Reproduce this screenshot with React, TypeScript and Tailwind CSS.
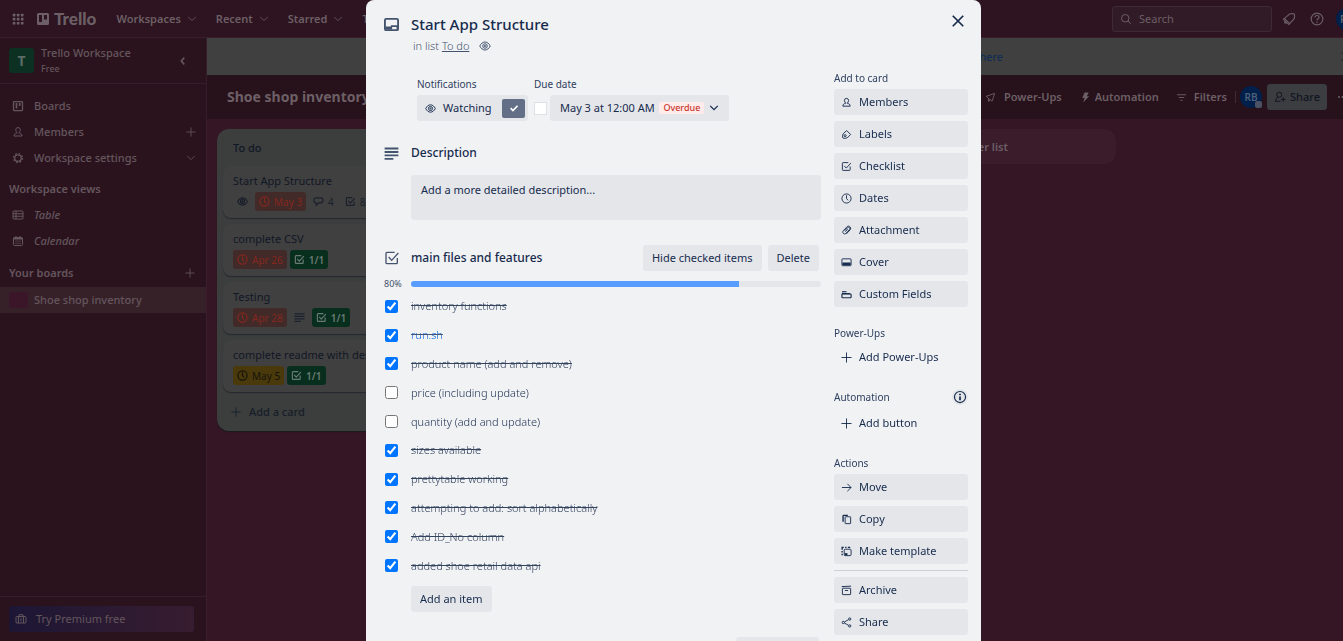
import React from "react";
import type { ReactNode } from "react";

type IconName =
  | "apps" | "board" | "person" | "gear" | "table" | "calendar" | "plus" | "down" | "left"
  | "eye" | "clock" | "comment" | "check" | "lines" | "case" | "search" | "bell" | "help"
  | "rocket" | "bolt" | "filter" | "addPerson" | "close" | "card" | "tick" | "label"
  | "clip" | "cover" | "fields" | "info" | "arrow" | "copy" | "template" | "archive" | "share" | "more";

const solid = { fill: "currentColor", stroke: "none" };

const drawings: Record<IconName, ReactNode> = {
  apps: (
    <g {...solid}>
      {[3, 10, 17].map((y) => [3, 10, 17].map((x) => <rect key={`${x}-${y}`} x={x} y={y} width="4.500" height="4.500" rx="1" />))}
    </g>
  ),
  board: <><rect x="3" y="3" width="18" height="18" rx="1" strokeWidth="2.500" /><path d="M9 6v11M15.500 6v6" strokeWidth="3.500" /></>,
  person: <path d="M12 3a4.5 4.5 0 0 0-4.500 4.500c0 2.500 1.500 5 3 6-4 .7-6.500 3-6.500 6.500h16c0-3.500-2.500-5.800-6.500-6.500 1.500-1 3-3.500 3-6A4.500 4.500 0 0 0 12 3z" />,
  gear: <><circle cx="12" cy="12" r="6.500" strokeWidth="2.500" /><circle cx="12" cy="12" r="9" strokeWidth="2.500" strokeDasharray="3.534 3.534" /></>,
  table: <><rect x="2" y="4" width="20" height="16" rx="2" /><path d="M2 9.500h20M2 14.500h20M8 4v16" /></>,
  calendar: (
    <>
      <rect x="3" y="5" width="18" height="16" rx="2" /><path d="M3 7h18" strokeWidth="4" /><path d="M8 2v3M16 2v3" />
      <path d="M7 12h2m2 0h2m2 0h2M7 16.500h2m2 0h2m2 0h2" strokeWidth="2.500" />
    </>
  ),
  plus: <path d="M12 1v22M1 12h22" />,
  down: <path d="M3 7l9 9 9-9" />,
  left: <path d="M15 4l-7 8 7 8" />,
  eye: <><path d="M1.500 12C4 7 7.700 4 12 4S20 7 22.500 12C20 17 16.300 20 12 20S4 17 1.500 12z" /><circle cx="12" cy="12" r="4.500" /><circle cx="12" cy="12" r="1.300" /></>,
  clock: <><circle cx="12" cy="12" r="10" /><path d="M12 5v7l3.500 4" /></>,
  comment: <path d="M7.500 4h9a5.500 5.500 0 0 1 0 11H13l-6 5v-5a5.500 5.500 0 0 1 .500-11z" />,
  check: <><path d="M20 12v7a1.500 1.500 0 0 1-1.500 1.500h-14A1.500 1.500 0 0 1 3 19V5a1.500 1.500 0 0 1 1.500-1.500H16" /><path d="M7 10.500l4.500 5L21.500 4.500" /></>,
  lines: <path d="M1 4h22M1 9.500h22M1 15h22M1 20.500h14" />,
  case: <><rect x="2" y="7" width="20" height="13" rx="2" /><path d="M8 7V3.500h8V7M7 7v13M17 7v13M12 10v7" /></>,
  search: <><circle cx="10.500" cy="10.500" r="7.500" /><path d="M16 16l5.500 5.500" /></>,
  bell: <><path d="M13 3.500c3.500-1 6.500-.500 8 0 .5 1.500 1 4.500 0 8L13 20 4 11z" /><path d="M4 11l-1.500 1.500 9 9L13 20M5.500 16c-2 1.500-1 4 2.500 2.500" /></>,
  help: <><circle cx="12" cy="12" r="10" /><path d="M8.500 9.500c0-2 1.500-3.500 3.500-3.500s3.500 1.300 3.500 3.200c0 2.300-3.500 2.500-3.500 5.300M12 16.500v2.500" /></>,
  rocket: <path d="M21 3L2.500 9.500l5 4.500v6.500l4-3.500 4 3L21 3zM7.500 14l4 3" />,
  bolt: <path {...solid} d="M10 1h9l-4 8h5L7 23l3-10H5z" />,
  filter: <path d="M2 6h20M6 12h12M9.500 18h5" />,
  addPerson: <><circle cx="10.500" cy="7.500" r="5" /><path d="M8 12l-4 3.500-1.500 5H13M18.500 12.500v9M14 17h9" /></>,
  close: <path d="M3 3l18 18M21 3L3 21" />,
  card: <><rect x="1.500" y="3" width="21" height="18" rx="2" /><path d="M2 17.500h11M20 17.500h2" strokeWidth="5" /><path d="M11 14.500h11" /></>,
  tick: <path d="M4 12.500l5.500 5.500L20.500 6.500" />,
  label: <><path d="M12.500 3.500L21 12l-5.500 5.500c-2.500 2.500-5.500 2.800-9.500 2.800-1.500 0-2.500-1-2.500-2.500C3.500 14 3.800 11 6 9z" /><circle cx="9" cy="14.500" r="2.200" /></>,
  clip: <path d="M8 12.500l6-6.500c3-3 7 1 4.500 4L11 18c-4 4-9.500-1-6-5.500L13 4c4-4.500 11 2 7 6.500l-8.500 9M9.500 14.500l5-5.500" />,
  cover: <><rect x="2" y="4" width="20" height="15" rx="1.500" /><path d="M3 15h18" strokeWidth="6" /></>,
  fields: <><path d="M2 6h10" strokeWidth="2.500" /><rect x="2" y="11" width="20" height="8" rx="1.500" strokeWidth="2.500" /><path d="M2 10h18" strokeWidth="2.500" /></>,
  info: <><circle cx="12" cy="12" r="9.500" /><path d="M12 6.500v2.500M12 11v6.500" strokeWidth="3" /></>,
  arrow: <path d="M2 12h20M14 4l8 8-8 8" />,
  copy: <><rect x="9" y="6" width="12" height="15" rx="1" /><path d="M15 3H6a1.500 1.500 0 0 0-1.500 1.500V17" strokeWidth="3" /></>,
  template: <><rect x="7" y="7" width="15" height="14" rx="2" /><path d="M8 18h6" strokeWidth="5" /><path d="M2.500 20v-3m0-3v-3m0-3V3H6m3 0h3m3 0h5" strokeWidth="3" /></>,
  archive: <><path d="M1.500 3.500L22 2.500" /><rect x="3" y="7" width="18" height="14" rx="1" /><path d="M8.500 12h7" /></>,
  share: <><circle cx="5" cy="12" r="2.500" /><circle cx="19" cy="4.500" r="2.500" /><circle cx="19" cy="19.500" r="2.500" /><path d="M7.500 10.800l9-5M7.500 13.200l9 5" /></>,
  more: <g {...solid}><circle cx="4" cy="12" r="2" /><circle cx="11" cy="12" r="2" /><circle cx="18" cy="12" r="2" /></g>,
};

function Icon({ name, className = "size-3", weight = 2 }: { name: IconName; className?: string; weight?: number }) {
  return (
    <svg viewBox="0 0 24 24" className={`shrink-0 ${className}`} fill="none" stroke="currentColor" strokeWidth={weight} aria-hidden="true">
      {drawings[name]}
    </svg>
  );
}

function TrelloMark() {
  return (
    <svg viewBox="0 0 24 24" className="size-3 shrink-0" aria-hidden="true">
      <path fill="currentColor" fillRule="evenodd" d="M3 0h18a3 3 0 0 1 3 3v18a3 3 0 0 1-3 3H3a3 3 0 0 1-3-3V3a3 3 0 0 1 3-3zm1 4v14h6V4zm10 0v9h6V4z" />
    </svg>
  );
}

function TopBar() {
  return (
    <header className="flex h-[38px] shrink-0 items-center border-b border-[#391d2b] bg-[#2d1420] pl-[11px] font-semibold text-[#6c5f65]">
      <button aria-label="More from Atlassian"><Icon name="apps" className="size-[14px]" /></button>
      <a href="#home" className="ml-3 flex items-center gap-[5px] font-['Lato'] text-[17px] font-black">
        <TrelloMark />
        Trello
      </a>
      <nav className="ml-5 flex items-center gap-[19px]">
        {["Workspaces", "Recent", "Starred", "Templates"].map((item) => (
          <button key={item} className="flex items-center gap-1.5">
            {item}
            <Icon name="down" className="size-2.5" />
          </button>
        ))}
      </nav>
      <div className="ml-auto flex items-center">
        <label className="flex h-[26px] w-40 items-center gap-[7px] rounded-[3px] border border-[#3f2a34] bg-[#311b26] pl-[7px] font-normal">
          <Icon name="search" />
          <input type="search" aria-label="Search" placeholder="Search" className="w-24 bg-transparent outline-none placeholder:text-[#6c5f65]" />
        </label>
        <button aria-label="Notifications" className="ml-2.5"><Icon name="bell" className="size-[14px]" /></button>
        <button aria-label="Help" className="ml-3.5"><Icon name="help" className="size-[14px]" /></button>
        <button className="-mr-[15px] ml-3 size-[22px] rounded-full bg-[#00204a] pl-1 text-left text-[10px] text-[#5c6470]">RB</button>
      </div>
    </header>
  );
}

function SideLink({ icon, label, end, italic = false }: { icon: IconName; label: string; end?: IconName; italic?: boolean }) {
  return (
    <a href={`#${label}`} className={`flex h-[26px] items-center pr-2.5 pl-3 ${italic ? "italic" : ""}`}>
      <Icon name={icon} className="mr-2.5 size-3" />
      {label}
      {end && <Icon name={end} className="ml-auto size-2.5" />}
    </a>
  );
}

function Sidebar() {
  return (
    <aside className="flex w-[207px] shrink-0 flex-col border-r border-[#391d2b] bg-[#2b131e] font-medium text-[#64565d]">
      <div className="flex h-[46px] shrink-0 items-center border-b border-[#391d2b] pl-[9px]">
        <span className="flex size-[25px] items-center justify-center rounded-[3px] bg-[#0c3122] text-sm font-bold text-[#5c6b65]">T</span>
        <div className="ml-[7px] leading-4">
          <div>Trello Workspace</div>
          <div className="text-[9px]">Free</div>
        </div>
        <button aria-label="Collapse sidebar" className="mr-4.5 ml-auto"><Icon name="left" className="size-2.5" weight={4} /></button>
      </div>
      <nav className="flex grow flex-col pt-[9px]">
        <SideLink icon="board" label="Boards" />
        <SideLink icon="person" label="Members" end="plus" />
        <SideLink icon="gear" label="Workspace settings" end="down" />
        <h2 className="mt-[5px] flex h-[26px] items-center pl-[9px] font-semibold">Workspace views</h2>
        <SideLink icon="table" label="Table" italic />
        <SideLink icon="calendar" label="Calendar" italic />
        <div className="mt-1.5 flex h-[26px] items-center justify-between pr-[11px] pl-[9px]">
          <h2 className="font-semibold">Your boards</h2>
          <button aria-label="Create board"><Icon name="plus" className="size-2.5" /></button>
        </div>
        <a href="#shoe" className="mt-px flex h-[26px] items-center gap-1.5 bg-[#372129] pl-[9px]">
          <span className="h-4 w-[19px] rounded-[2px] bg-[#3b1528]" />
          Shoe shop inventory
        </a>
      </nav>
      <div className="border-t border-[#391d2b] py-[9px] pr-3 pl-[9px]">
        <button className="flex h-[26px] w-full items-center gap-[9px] rounded-[3px] bg-linear-to-r from-[#1c1635] to-[#381c2f] pl-1.5 font-normal">
          <Icon name="case" /> Try Premium free
        </button>
      </div>
    </aside>
  );
}

function Badge({ icon, text, tone = "" }: { icon: IconName; text: string; tone?: string }) {
  return (
    <span className={`flex h-[19px] items-center gap-1 rounded-[3px] px-1 text-[10px] ${tone}`}>
      <Icon name={icon} className="size-[11px]" weight={2.5} />
      {text}
    </span>
  );
}

const overdue = "bg-[#412a28] text-[#85281f]";
const complete = "bg-[#082f1e] font-semibold text-[#6a7b73]";

function ListCard({ title, children }: { title: string; children: ReactNode }) {
  return (
    <article className="h-[52px] rounded-lg bg-[#404040] px-2.5 pt-[5px] shadow-[0_1px_1px_#25282d]">
      <h3 className="h-5 leading-5 whitespace-nowrap text-[#111725]">{title}</h3>
      <div className="mt-px flex gap-[3px] text-[#1a202c]">{children}</div>
    </article>
  );
}

function Board() {
  return (
    <main className="flex min-w-0 grow flex-col bg-[#351625]">
      <div className="flex h-[37px] shrink-0 items-center justify-end bg-[#404040]">
        <a href="#more" className="text-[#0b2b57]">Read more here</a>
        <button aria-label="Dismiss" className="-mr-2 ml-[337px] text-[#171b24]"><Icon name="close" className="size-[11px]" /></button>
      </div>
      <div className="flex h-[44px] shrink-0 items-center bg-[#27111b] pl-5 font-semibold text-[#6c5f65]">
        <h1 className="text-sm font-bold">Shoe shop inventory</h1>
        <div className="ml-auto flex items-center">
          <button className="flex items-center gap-2"><Icon name="rocket" className="size-[11px]" />Power-Ups</button>
          <button className="ml-[18px] flex items-center gap-1"><Icon name="bolt" className="size-[11px]" />Automation</button>
          <button className="ml-[17px] flex items-center gap-[7px]"><Icon name="filter" className="size-[11px]" />Filters</button>
          <div className="mr-1 ml-2 h-3 w-px bg-[#3f2a34]" />
          <div className="relative flex size-[22px] items-center justify-center rounded-full bg-[#001f4b] text-[10px] text-[#4e6079]">
            RB
            <span className="absolute right-0 bottom-0 size-[7px] rounded-[2px] bg-[#4a5264]" />
          </div>
          <button className="ml-[5px] flex h-[26px] items-center gap-1 rounded-[3px] bg-[#3b3d40] px-[7px] font-medium text-[#111622]">
            <Icon name="addPerson" /> Share
          </button>
          <button aria-label="More" className="-mr-1.5 ml-2.5"><Icon name="more" /></button>
        </div>
      </div>
      <div className="flex items-start justify-between gap-3 py-2.5 pr-[227px] pl-2.5">
        <section className="flex h-[302px] w-[245px] flex-col gap-1.5 rounded-xl bg-[#3b3e3d] px-1.5 shadow-[0_1px_1px_#181a1d]">
          <h2 className="h-[31px] shrink-0 px-2.5 pt-px leading-9 font-medium text-[#111725]">To do</h2>
          <ListCard title="Start App Structure">
            <Badge icon="eye" text="" />
            <Badge icon="clock" text="May 3" tone={overdue} />
            <Badge icon="comment" text="4" />
            <Badge icon="check" text="8/10" />
          </ListCard>
          <ListCard title="complete CSV">
            <Badge icon="clock" text="Apr 26" tone={overdue} />
            <Badge icon="check" text="1/1" tone={complete} />
          </ListCard>
          <ListCard title="Testing">
            <Badge icon="clock" text="Apr 28" tone={overdue} />
            <Badge icon="lines" text="" />
            <Badge icon="check" text="1/1" tone={complete} />
          </ListCard>
          <ListCard title="complete readme with description">
            <Badge icon="clock" text="May 5" tone="bg-[#4a390b] text-[#15130b]" />
            <Badge icon="check" text="1/1" tone={complete} />
          </ListCard>
          <button className="flex h-7 items-center gap-2 pl-2 font-medium text-[#171d29]">
            <Icon name="plus" className="size-2.5" /> Add a card
          </button>
        </section>
        <button className="flex h-[35px] w-[230px] items-center gap-3 rounded-xl bg-[#3a1c2b] pl-3.5 font-semibold text-[#6c5f65]">
          <Icon name="plus" className="size-2.5" /> Add another list
        </button>
      </div>
    </main>
  );
}

function ActionButton({ icon, label, plain = false }: { icon: IconName; label: string; plain?: boolean }) {
  return (
    <button className={`flex h-[26px] w-full shrink-0 items-center gap-[7px] rounded-[3px] pl-[7px] font-normal ${plain ? "" : "bg-[#e4e6ea]"}`}>
      <Icon name={icon} className="size-[11px]" />
      {label}
    </button>
  );
}

function SideHeading({ children }: { children: ReactNode }) {
  return <h3 className="h-4 text-[10px] leading-4 font-normal text-[#2f4060]">{children}</h3>;
}

const items: { text: string; done: boolean; link?: boolean }[] = [
  { text: "inventory functions", done: true },
  { text: "run.sh", done: true, link: true },
  { text: "product name (add and remove)", done: true },
  { text: "price (including update)", done: false },
  { text: "quantity (add and update)", done: false },
  { text: "sizes available", done: true },
  { text: "prettytable working", done: true },
  { text: "attempting to add: sort alphabetically", done: true },
  { text: "Add ID_No column", done: true },
  { text: "added shoe retail data api", done: true },
];

const grayButton = "flex h-[26px] items-center rounded-[3px] bg-[#e4e6ea] px-[9px] font-normal";

function CardDetails() {
  return (
    <div className="min-w-0 grow">
      <div className="grid grid-cols-[27px_1fr] items-center pt-[11px]">
        <Icon name="card" className="size-[15px] text-[#44546f]" weight={3} />
        <h2 className="text-[15px] leading-[26px] font-medium">Start App Structure</h2>
      </div>
      <div className="flex h-[18px] items-center pl-[29px] font-light text-[#44546f]">
        in list&nbsp;<a href="#list" className="underline">To do</a>
        <Icon name="eye" className="ml-2.5 size-3" />
      </div>
      <div className="mt-[21px] flex gap-1.5 pl-[33px]">
        <div>
          <SideHeading>Notifications</SideHeading>
          <button className="mt-[3px] flex h-[26px] w-[111px] items-center rounded-[3px] bg-[#e4e6ea] pr-[3px] pl-2 font-normal">
            <Icon name="eye" className="mr-[7px] size-[11px]" />
            Watching
            <span className="ml-auto flex h-[19px] w-[23px] items-center justify-center rounded-[2px] bg-[#626f86] text-white">
              <Icon name="tick" className="size-2.5" weight={4} />
            </span>
          </button>
        </div>
        <div>
          <SideHeading>Due date</SideHeading>
          <div className="mt-[3px] flex items-center gap-[3px]">
            <input type="checkbox" aria-label="Mark due date complete" className="size-[13px] appearance-none border border-[#dfe1e6] bg-white" />
            <button className="flex h-[26px] w-[179px] items-center justify-between rounded-[3px] bg-[#e4e6ea] px-2.5 font-normal whitespace-nowrap">
              May 3 at 12:00 AM
              <span className="rounded-[2px] bg-[#ffeceb] px-1 text-[9px] leading-3 font-medium text-[#c9372c]">Overdue</span>
              <Icon name="down" className="size-2.5" weight={3} />
            </button>
          </div>
        </div>
      </div>

      <div className="mt-5 grid grid-cols-[27px_1fr] items-center">
        <Icon name="lines" className="size-[15px] text-[#44546f]" weight={3} />
        <h3 className="text-[12px] leading-6 font-medium">Description</h3>
        <button className="col-start-2 mt-2.5 h-[45px] rounded-[3px] bg-[#e4e6ea] px-2.5 pb-4 text-left font-normal">
          Add a more detailed description...
        </button>
      </div>

      <div className="mt-[25px] grid grid-cols-[27px_1fr] items-center">
        <Icon name="check" className="size-4 text-[#44546f]" />
        <div className="flex items-center gap-1.5 pr-0.5">
          <h3 className="mr-auto text-[12px] font-medium">main files and features</h3>
          <button className={grayButton}>Hide checked items</button>
          <button className={grayButton}>Delete</button>
        </div>
      </div>
      <div className="mt-[5px] grid h-[14px] grid-cols-[27px_1fr] items-center">
        <span className="text-[9px] text-[#44546f]">80%</span>
        <div className="h-1.5 overflow-hidden rounded-full bg-[#e4e6ea]">
          <div className="h-full w-4/5 bg-[#579dff]" />
        </div>
      </div>
      <ul className="mt-0.5 grid h-72 grid-rows-10">
        {items.map((item) => (
          <li key={item.text}>
            <label className="flex h-full items-center">
              <input type="checkbox" defaultChecked={item.done} className="mr-[13px] ml-px size-[13px]" />
              <span className={item.done ? (item.link ? "font-light text-[#0c66e4] line-through decoration-[#44546f]" : "font-light text-[#34445f] line-through") : "font-light"}>
                {item.text}
              </span>
            </label>
          </li>
        ))}
      </ul>
      <div className="mt-[6px] pl-[27px]">
        <button className={grayButton}>Add an item</button>
      </div>
      <div className="mt-[25px] flex justify-end pr-0.5">
        <button className={grayButton}>Show details</button>
      </div>
    </div>
  );
}

function CardActions() {
  return (
    <aside className="w-[134px] shrink-0 pt-[70px]">
      <SideHeading>Add to card</SideHeading>
      <div className="mt-[3px] flex flex-col gap-1.5">
        <ActionButton icon="person" label="Members" />
        <ActionButton icon="label" label="Labels" />
        <ActionButton icon="check" label="Checklist" />
        <ActionButton icon="clock" label="Dates" />
        <ActionButton icon="clip" label="Attachment" />
        <ActionButton icon="cover" label="Cover" />
        <ActionButton icon="fields" label="Custom Fields" />
      </div>
      <div className="mt-[18px]">
        <SideHeading>Power-Ups</SideHeading>
        <div className="mt-[3px]"><ActionButton icon="plus" label="Add Power-Ups" plain /></div>
      </div>
      <div className="mt-[19px]">
        <div className="flex items-center justify-between">
          <SideHeading>Automation</SideHeading>
          <button aria-label="About automation" className="rounded-full bg-[#e4e6ea] p-px"><Icon name="info" className="size-[14px]" /></button>
        </div>
        <div className="mt-[5px]"><ActionButton icon="plus" label="Add button" plain /></div>
      </div>
      <div className="mt-[19px]">
        <SideHeading>Actions</SideHeading>
        <div className="mt-[3px] flex flex-col gap-1.5">
          <ActionButton icon="arrow" label="Move" />
          <ActionButton icon="copy" label="Copy" />
          <ActionButton icon="template" label="Make template" />
          <hr className="border-[#cdd0d6]" />
          <ActionButton icon="archive" label="Archive" />
          <ActionButton icon="share" label="Share" />
        </div>
      </div>
    </aside>
  );
}

export default function App() {
  return (
    <div className="flex h-screen flex-col overflow-hidden font-['Noto_Sans','Open_Sans',sans-serif] text-[11px] leading-4">
      <TopBar />
      <div className="flex min-h-0 grow">
        <Sidebar />
        <Board />
      </div>
      <div className="fixed inset-0 flex justify-center overflow-hidden pl-1">
        <section role="dialog" aria-label="Start App Structure" className="relative flex w-[615px] gap-[13px] overflow-hidden rounded-t-lg bg-[#f1f2f4] pr-[13px] pl-[18px] text-[#172b4d]">
          <CardDetails />
          <CardActions />
          <button aria-label="Close" className="absolute top-3.5 right-4"><Icon name="close" className="size-[14px]" weight={3} /></button>
        </section>
      </div>
    </div>
  );
}
